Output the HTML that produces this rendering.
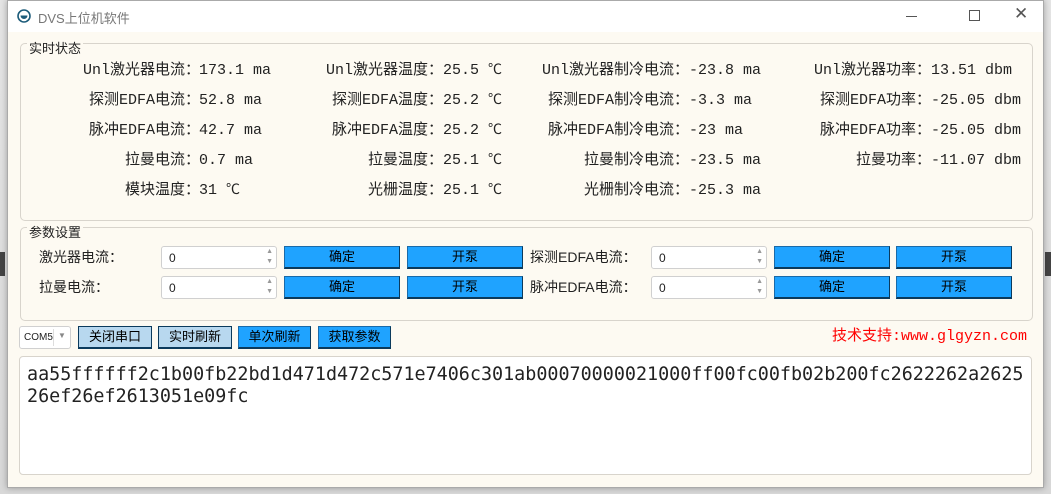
<!DOCTYPE html>
<html><head><meta charset="utf-8"><style>
*{margin:0;padding:0;box-sizing:border-box}
body{width:1051px;height:494px;background:linear-gradient(#e4e4e4,#d8d8d8);position:relative;overflow:hidden;font-family:"Liberation Sans","Noto Sans CJK SC",sans-serif;color:#222}
.win{position:absolute;left:7px;top:0;width:1037px;height:488px;background:#fdfaf2;border:1px solid #aaa;box-shadow:0 0 6px rgba(0,0,0,.3)}
.title{position:absolute;left:0;top:0;width:100%;height:31px;background:#fff}
.a{position:absolute;white-space:nowrap}
.gb{position:absolute;border:1px solid #d8d4cc;border-radius:5px}
.gt{position:absolute;background:#fdfaf2;font-size:13px;padding:0 2px;line-height:14px}
.m{font-family:"Liberation Mono","Noto Sans CJK SC",monospace;font-size:15px;line-height:18px}
.l{text-align:right;width:200px}
.c{display:inline-block;width:14px;overflow:hidden;font-size:14px;vertical-align:top}
.sp{position:absolute;background:#fff;border:1px solid #d0d0d0;border-radius:3px;height:23px;width:116px;font-size:12px;padding:4px 7px}
.sp:after{content:"▲\A▼";white-space:pre;position:absolute;right:3px;top:0;font-size:7px;line-height:10px;color:#999}
.b{position:absolute;background:#1fa3ff;border:1px solid #1a6aa8;border-right-color:#0b3a5c;border-bottom:2px solid #0b3a5c;height:23px;width:116px;font-size:13px;text-align:center;line-height:20px;color:#000}
.lb{font-size:14px;line-height:18px}
</style></head><body>
<div style="position:absolute;left:0;top:252px;width:5px;height:24px;background:#444"></div>
<div style="position:absolute;left:1045px;top:252px;width:6px;height:24px;background:#444"></div>
<div class="win">
<div class="title">
<svg class="a" style="left:9px;top:8px" width="14" height="14" viewBox="0 0 14 14"><circle cx="7" cy="7" r="6" fill="#fff" stroke="#1d5c7a" stroke-width="1.6"/><path d="M3.5 6.5h7a3.5 3.5 0 0 1-7 0z" fill="#1d5c7a"/></svg>
<div class="a" style="left:30px;top:7px;font-size:13px;color:#777">DVS上位机软件</div>
<div class="a" style="left:898px;top:15px;width:11px;height:1px;background:#555"></div>
<div class="a" style="left:961px;top:9px;width:11px;height:11px;border:1px solid #555"></div>
<div class="a" style="left:1006px;top:3px;font-size:17px;color:#555">✕</div>
</div>
<div class="gb" style="left:12px;top:42px;width:1013px;height:178px"></div>
<div class="gt" style="left:19px;top:41px">实时状态</div>
<div class="gb" style="left:12px;top:226px;width:1013px;height:94px"></div>
<div class="gt" style="left:19px;top:225px">参数设置</div>
</div>
<div class="a m l" style="left:0;top:62px">Unl激光器电流：</div><div class="a m" style="left:199px;top:62px">173.1 ma</div>
<div class="a m l" style="left:0;top:92px">探测EDFA电流：</div><div class="a m" style="left:199px;top:92px">52.8 ma</div>
<div class="a m l" style="left:0;top:122px">脉冲EDFA电流：</div><div class="a m" style="left:199px;top:122px">42.7 ma</div>
<div class="a m l" style="left:0;top:152px">拉曼电流：</div><div class="a m" style="left:199px;top:152px">0.7 ma</div>
<div class="a m l" style="left:0;top:182px">模块温度：</div><div class="a m" style="left:199px;top:182px">31 <span class="c">℃</span></div>

<div class="a m l" style="left:243px;top:62px">Unl激光器温度：</div><div class="a m" style="left:443px;top:62px">25.5 <span class="c">℃</span></div>
<div class="a m l" style="left:243px;top:92px">探测EDFA温度：</div><div class="a m" style="left:443px;top:92px">25.2 <span class="c">℃</span></div>
<div class="a m l" style="left:243px;top:122px">脉冲EDFA温度：</div><div class="a m" style="left:443px;top:122px">25.2 <span class="c">℃</span></div>
<div class="a m l" style="left:243px;top:152px">拉曼温度：</div><div class="a m" style="left:443px;top:152px">25.1 <span class="c">℃</span></div>
<div class="a m l" style="left:243px;top:182px">光栅温度：</div><div class="a m" style="left:443px;top:182px">25.1 <span class="c">℃</span></div>

<div class="a m l" style="left:489px;top:62px">Unl激光器制冷电流：</div><div class="a m" style="left:689px;top:62px">-23.8 ma</div>
<div class="a m l" style="left:489px;top:92px">探测EDFA制冷电流：</div><div class="a m" style="left:689px;top:92px">-3.3 ma</div>
<div class="a m l" style="left:489px;top:122px">脉冲EDFA制冷电流：</div><div class="a m" style="left:689px;top:122px">-23 ma</div>
<div class="a m l" style="left:489px;top:152px">拉曼制冷电流：</div><div class="a m" style="left:689px;top:152px">-23.5 ma</div>
<div class="a m l" style="left:489px;top:182px">光栅制冷电流：</div><div class="a m" style="left:689px;top:182px">-25.3 ma</div>

<div class="a m l" style="left:731px;top:62px">Unl激光器功率：</div><div class="a m" style="left:931px;top:62px">13.51 dbm</div>
<div class="a m l" style="left:731px;top:92px">探测EDFA功率：</div><div class="a m" style="left:931px;top:92px">-25.05 dbm</div>
<div class="a m l" style="left:731px;top:122px">脉冲EDFA功率：</div><div class="a m" style="left:931px;top:122px">-25.05 dbm</div>
<div class="a m l" style="left:731px;top:152px">拉曼功率：</div><div class="a m" style="left:931px;top:152px">-11.07 dbm</div>

<div class="a lb" style="left:39px;top:248px">激光器电流：</div>
<div class="sp" style="left:161px;top:246px">0</div>
<div class="b" style="left:284px;top:246px">确定</div><div class="b" style="left:407px;top:246px">开泵</div>
<div class="a lb" style="left:530px;top:248px">探测EDFA电流：</div>
<div class="sp" style="left:651px;top:246px">0</div>
<div class="b" style="left:774px;top:246px">确定</div><div class="b" style="left:896px;top:246px">开泵</div>
<div class="a lb" style="left:39px;top:278px">拉曼电流：</div>
<div class="sp" style="left:161px;top:276px">0</div>
<div class="b" style="left:284px;top:276px">确定</div><div class="b" style="left:407px;top:276px">开泵</div>
<div class="a lb" style="left:530px;top:278px">脉冲EDFA电流：</div>
<div class="sp" style="left:651px;top:276px">0</div>
<div class="b" style="left:774px;top:276px">确定</div><div class="b" style="left:896px;top:276px">开泵</div>

<div class="a" style="left:19px;top:326px;width:52px;height:23px;background:#fff;border:1px solid #d0d0d0;border-radius:3px;font-size:10px;padding:5px 4px">COM5<span style="position:absolute;left:33px;top:2px;width:1px;height:17px;background:#ddd"></span><span style="position:absolute;left:38px;top:4px;font-size:8px;color:#888">▼</span></div>
<div class="b" style="left:78px;top:326px;width:74px;background:#b8d8ef;border-color:#0b3a5c">关闭串口</div>
<div class="b" style="left:158px;top:326px;width:74px;background:#b8d8ef;border-color:#0b3a5c">实时刷新</div>
<div class="b" style="left:238px;top:326px;width:73px">单次刷新</div>
<div class="b" style="left:318px;top:326px;width:73px">获取参数</div>
<div class="a m" style="left:832px;top:328px;color:#f00;font-size:15px">技术支持:www.glgyzn.com</div>

<div class="a" style="left:19px;top:356px;width:1013px;height:119px;background:#fff;border:1px solid #d8d4cc;border-radius:4px"></div>
<div class="a" style="left:27px;top:364px;font-family:'DejaVu Sans Mono',monospace;font-size:18.4px;line-height:22px;color:#222">aa55ffffff2c1b00fb22bd1d471d472c571e7406c301ab00070000021000ff00fc00fb02b200fc2622262a2625<br>26ef26ef2613051e09fc</div>
</body></html>
